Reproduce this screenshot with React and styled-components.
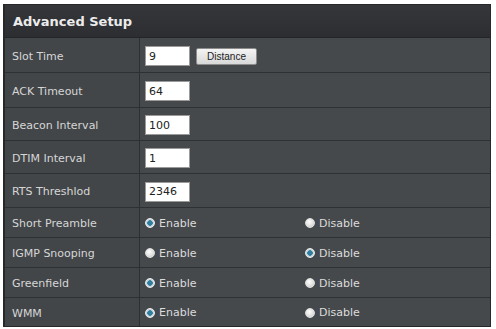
import React from "react";
import styled, { createGlobalStyle, css } from "styled-components";

const Global = createGlobalStyle`
  html, body { margin: 0; padding: 0; background: #ffffff; }
  body { font-family: "DejaVu Sans", Verdana, sans-serif; }
`;

const Page = styled.div`
  padding: 4px 5px 0 3px;
  width: 496px;
  height: 329px;
  box-sizing: border-box;
`;

const Panel = styled.div`
  width: 488px;
  border: 1px solid #26282a;
  border-left-width: 2px;
  background: #45484b;
  box-sizing: border-box;
`;

const Header = styled.div`
  height: 32px;
  display: flex;
  align-items: center;
  padding-left: 8px;
  background: linear-gradient(#34363a, #2c2e31);
  border-bottom: 1px solid #222426;
  color: #ececec;
  font-weight: bold;
  font-size: 13px;
`;

const Row = styled.div`
  display: grid;
  grid-template-columns: 134px 1fr;
  height: ${(p) => p.$h}px;
  border-bottom: ${(p) => (p.$last ? "none" : "1px solid #2e3033")};
`;

const Label = styled.div`
  display: flex;
  align-items: center;
  padding: 2px 0 0 7px;
  color: #d6d6d6;
  font-size: 11px;
  background: #434649;
`;

const Value = styled.div`
  display: flex;
  align-items: center;
  padding-left: 5px;
  border-left: 1px solid #2c2e30;
  background: #46494c;
`;

const Input = styled.div`
  width: 45px;
  height: 20px;
  box-sizing: border-box;
  background: #fff;
  border: 1px solid #9a9a9a;
  color: #222;
  font-size: 11px;
  padding-left: 3px;
  display: flex;
  align-items: center;
  margin-top: 2px;
`;

const Button = styled.div`
  margin-left: 6px;
  margin-top: 2px;
  width: 61px;
  height: 17px;
  box-sizing: border-box;
  border: 1px solid #8c8c8c;
  border-radius: 2px;
  background: linear-gradient(#f4f4f4, #d8d8d8);
  color: #222;
  font-size: 10px;
  display: flex;
  align-items: center;
  justify-content: center;
  font-family: "Liberation Sans", Arial, sans-serif;
`;

const Option = styled.div`
  width: 160px;
  display: flex;
  align-items: center;
  color: #dcdcdc;
  font-size: 11px;
  padding-top: 1px;
`;

const Dot = styled.span`
  width: 10px;
  height: 10px;
  border-radius: 50%;
  box-sizing: border-box;
  margin-right: 4px;
  ${(p) =>
    p.$on
      ? css`
          background: radial-gradient(circle, #2f7fa0 0 2.5px, #cfd6da 3px);
          border: 1px solid #e8eef0;
        `
      : css`
          background: radial-gradient(circle at 40% 35%, #ffffff, #c9c9c9);
          border: 1px solid #e0e0e0;
        `}
`;

const fields = [
  { label: "Slot Time", value: "9", button: "Distance", h: 34 },
  { label: "ACK Timeout", value: "64", h: 34 },
  { label: "Beacon Interval", value: "100", h: 32 },
  { label: "DTIM Interval", value: "1", h: 32 },
  { label: "RTS Threshlod", value: "2346", h: 33 },
];

const radios = [
  { label: "Short Preamble", on: "enable", h: 29 },
  { label: "IGMP Snooping", on: "disable", h: 29 },
  { label: "Greenfield", on: "enable", h: 29 },
  { label: "WMM", on: "enable", h: 28 },
];

export default function App() {
  return (
    <>
      <Global />
      <Page>
        <Panel>
          <Header>Advanced Setup</Header>
          {fields.map((f) => (
            <Row key={f.label} $h={f.h}>
              <Label>{f.label}</Label>
              <Value>
                <Input>{f.value}</Input>
                {f.button && <Button>{f.button}</Button>}
              </Value>
            </Row>
          ))}
          {radios.map((r, i) => (
            <Row key={r.label} $h={r.h} $last={i === radios.length - 1}>
              <Label>{r.label}</Label>
              <Value>
                <Option>
                  <Dot $on={r.on === "enable"} />
                  Enable
                </Option>
                <Option>
                  <Dot $on={r.on === "disable"} />
                  Disable
                </Option>
              </Value>
            </Row>
          ))}
        </Panel>
      </Page>
    </>
  );
}
